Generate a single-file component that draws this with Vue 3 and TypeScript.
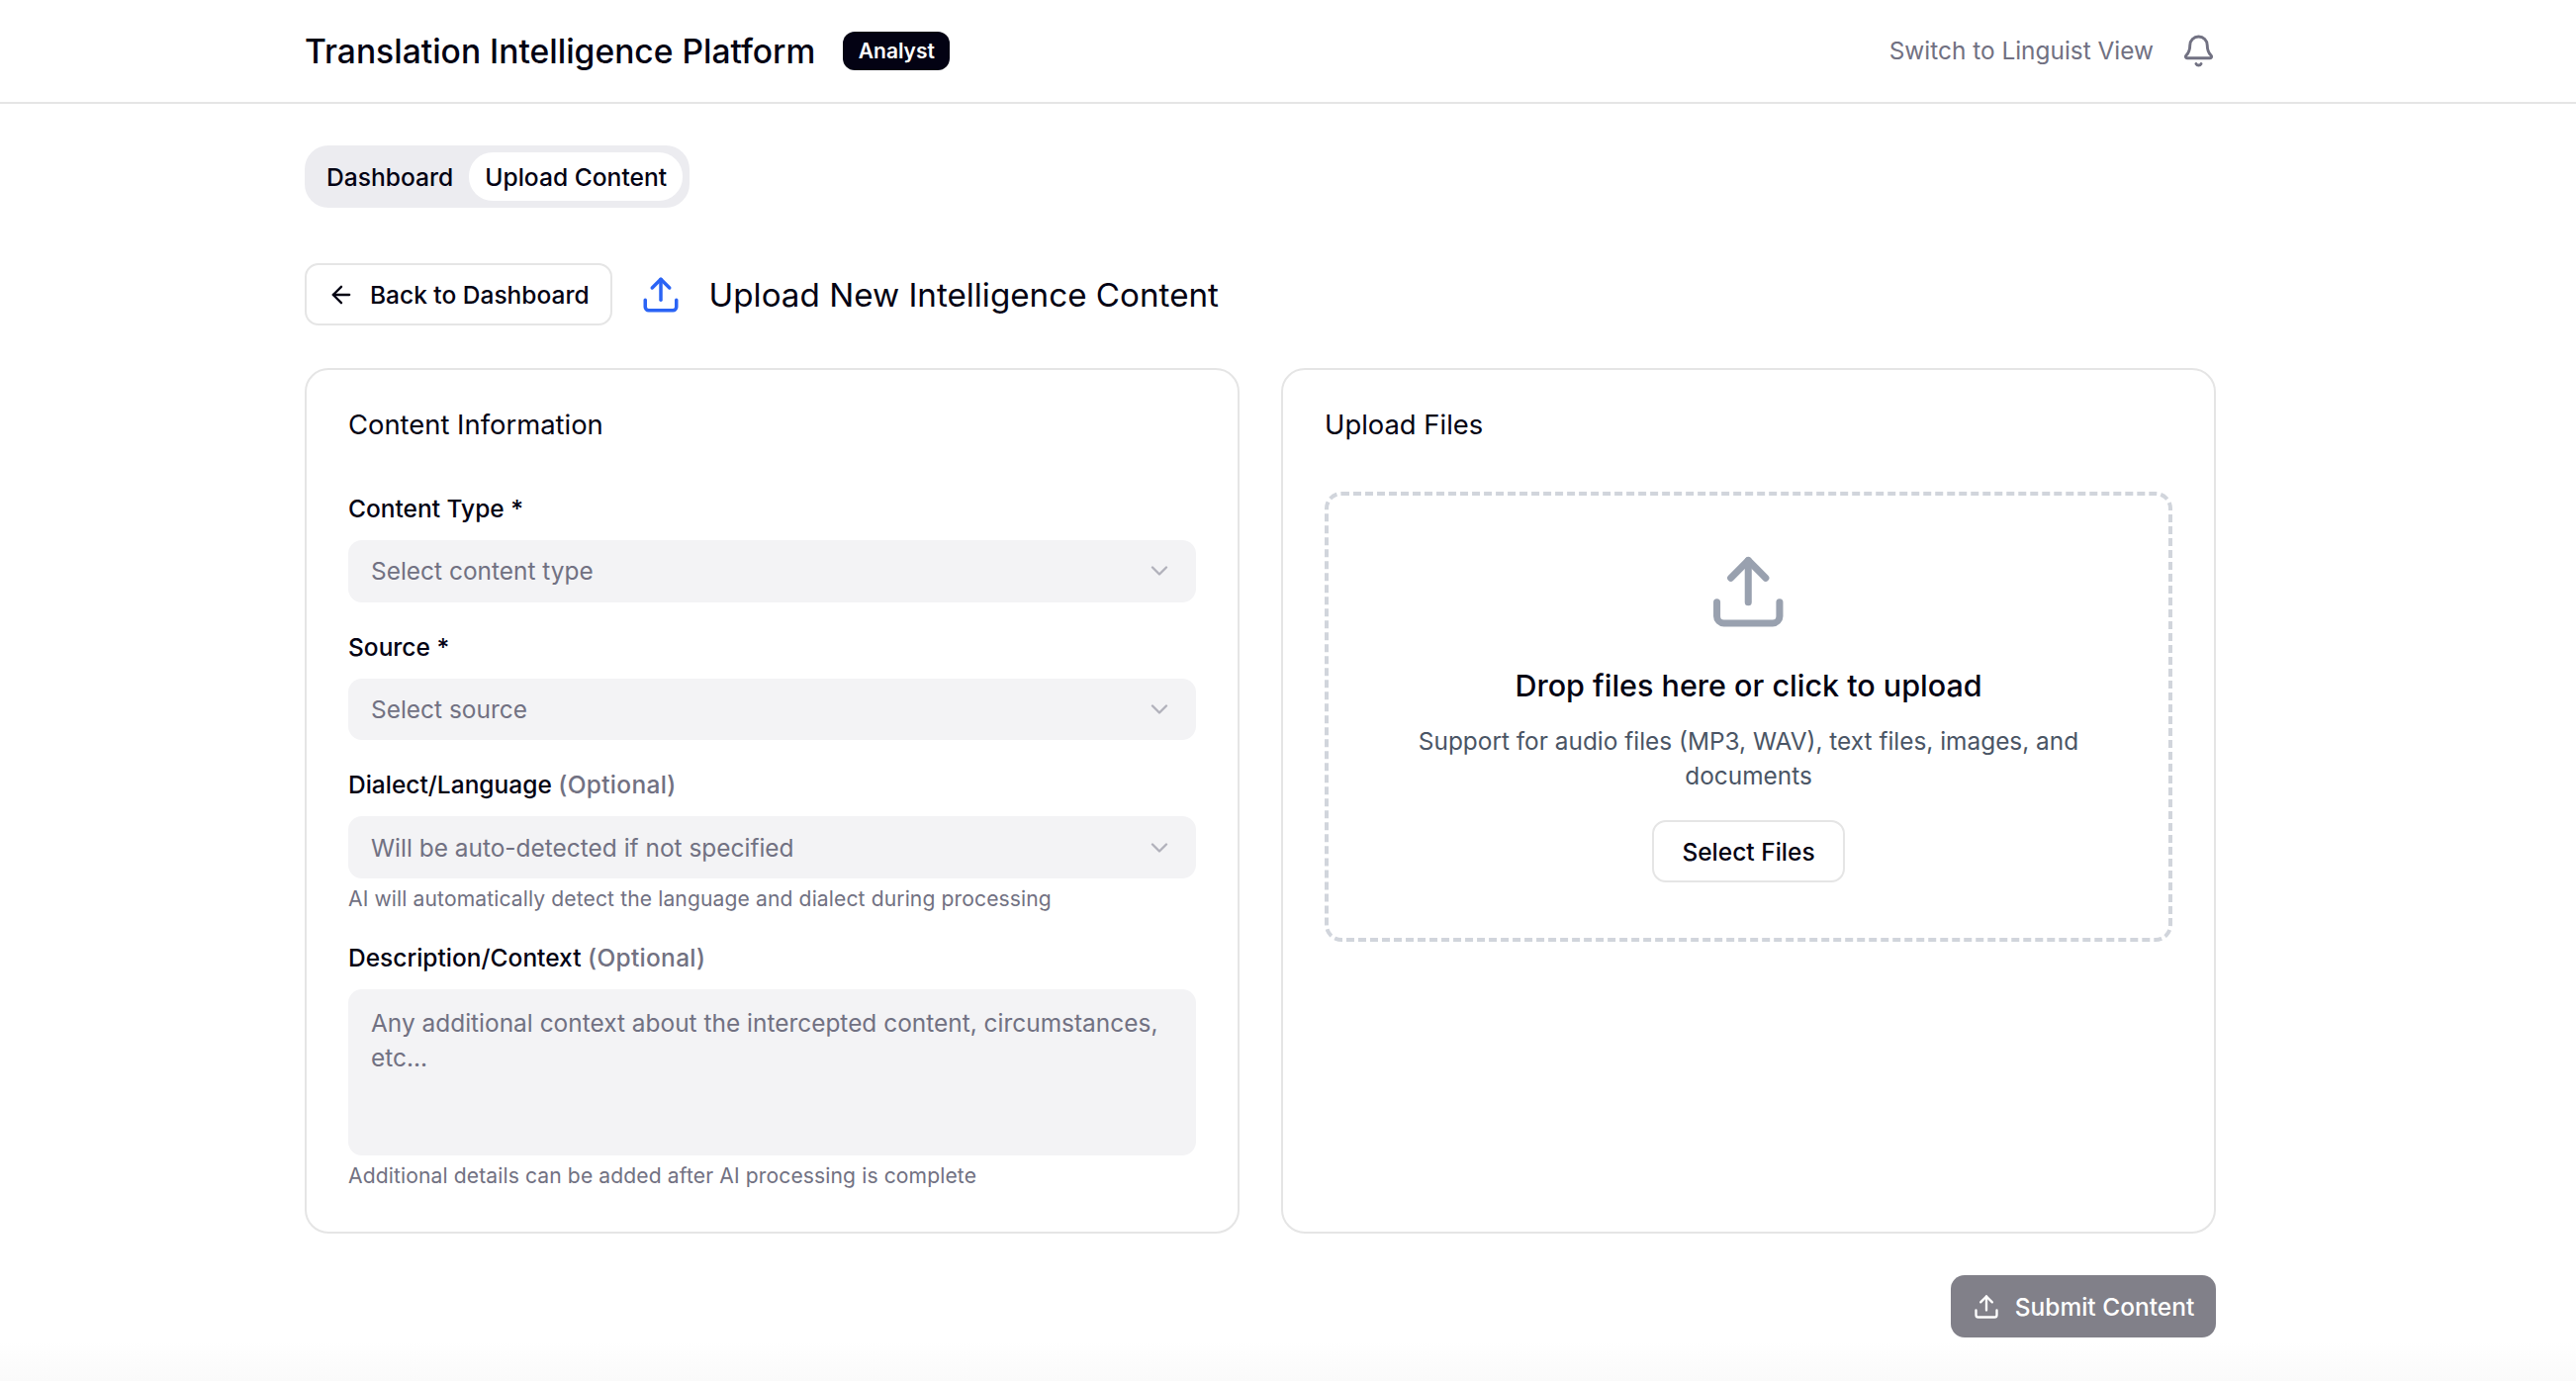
<script setup lang="ts">
interface Field {
  label: string
  suffix: string
  value: string
  help?: string
}

const fields: Field[] = [
  { label: 'Content Type *', suffix: '', value: 'Select content type' },
  { label: 'Source *', suffix: '', value: 'Select source' },
  {
    label: 'Dialect/Language',
    suffix: '(Optional)',
    value: 'Will be auto-detected if not specified',
    help: 'AI will automatically detect the language and dialect during processing',
  },
]
</script>

<template>
  <div class="page">
    <header class="topbar">
      <div class="brand">
        <h1 class="brand-title">Translation Intelligence Platform</h1>
        <span class="badge">Analyst</span>
      </div>
      <div class="top-actions">
        <span class="switch">Switch to Linguist View</span>
        <svg class="bell" viewBox="0 0 24 24" fill="none" stroke="currentColor" stroke-width="2" stroke-linecap="round" stroke-linejoin="round">
          <path d="M10.268 21a2 2 0 0 0 3.464 0" />
          <path d="M3.262 15.326A1 1 0 0 0 4 17h16a1 1 0 0 0 .74-1.673C19.41 13.956 18 12.499 18 8A6 6 0 0 0 6 8c0 4.499-1.411 5.956-2.738 7.326" />
        </svg>
      </div>
    </header>

    <main class="content">
      <div class="tabs">
        <span class="tab">Dashboard</span>
        <span class="tab active">Upload Content</span>
      </div>

      <div class="heading-row">
        <button class="btn back" type="button">
          <svg class="icon-sm" viewBox="0 0 24 24" fill="none" stroke="currentColor" stroke-width="2" stroke-linecap="round" stroke-linejoin="round">
            <path d="m12 19-7-7 7-7" />
            <path d="M19 12H5" />
          </svg>
          Back to Dashboard
        </button>
        <svg class="icon-blue" viewBox="0 0 24 24" fill="none" stroke="currentColor" stroke-width="2" stroke-linecap="round" stroke-linejoin="round">
          <path d="M21 15v4a2 2 0 0 1-2 2H5a2 2 0 0 1-2-2v-4" />
          <polyline points="17 8 12 3 7 8" />
          <line x1="12" x2="12" y1="3" y2="15" />
        </svg>
        <h2 class="page-title">Upload New Intelligence Content</h2>
      </div>

      <div class="columns">
        <section class="card">
          <h3 class="card-title">Content Information</h3>
          <div class="form">
            <div v-for="f in fields" :key="f.label" class="field">
              <label class="label">{{ f.label }} <span v-if="f.suffix" class="muted">{{ f.suffix }}</span></label>
              <div class="select">
                <span>{{ f.value }}</span>
                <svg class="chev" viewBox="0 0 24 24" fill="none" stroke="currentColor" stroke-width="2" stroke-linecap="round" stroke-linejoin="round">
                  <path d="m6 9 6 6 6-6" />
                </svg>
              </div>
              <p v-if="f.help" class="help">{{ f.help }}</p>
            </div>
            <div class="field">
              <label class="label">Description/Context <span class="muted">(Optional)</span></label>
              <div class="textarea">Any additional context about the intercepted content, circumstances, etc...</div>
              <p class="help">Additional details can be added after AI processing is complete</p>
            </div>
          </div>
        </section>

        <section class="card">
          <h3 class="card-title">Upload Files</h3>
          <div class="drop">
            <svg class="icon-lg" viewBox="0 0 24 24" fill="none" stroke="currentColor" stroke-width="2" stroke-linecap="round" stroke-linejoin="round">
              <path d="M21 15v4a2 2 0 0 1-2 2H5a2 2 0 0 1-2-2v-4" />
              <polyline points="17 8 12 3 7 8" />
              <line x1="12" x2="12" y1="3" y2="15" />
            </svg>
            <h4 class="drop-title">Drop files here or click to upload</h4>
            <p class="drop-text">Support for audio files (MP3, WAV), text files, images, and documents</p>
            <button class="btn select-files" type="button">Select Files</button>
          </div>
        </section>
      </div>

      <div class="footer-row">
        <button class="submit" type="button">
          <svg class="icon-sm" viewBox="0 0 24 24" fill="none" stroke="currentColor" stroke-width="2" stroke-linecap="round" stroke-linejoin="round">
            <path d="M21 15v4a2 2 0 0 1-2 2H5a2 2 0 0 1-2-2v-4" />
            <polyline points="17 8 12 3 7 8" />
            <line x1="12" x2="12" y1="3" y2="15" />
          </svg>
          Submit Content
        </button>
      </div>
    </main>
  </div>
</template>

<style>
html,
body {
  margin: 0;
  background: #fff;
}
</style>

<style scoped>
.page {
  box-sizing: border-box;
  height: 1396px;
  overflow: hidden;
  font-family: Inter, "Liberation Sans", sans-serif;
  color: #030213;
  background: linear-gradient(to bottom, #fff calc(100% - 40px), #fafafa 100%);
}

.topbar {
  box-sizing: border-box;
  height: 105px;
  padding: 0 364px 0 308px;
  display: flex;
  align-items: center;
  justify-content: space-between;
  border-bottom: 2px solid #e5e5e5;
}

.brand {
  display: flex;
  align-items: center;
  gap: 28px;
}

.brand-title {
  margin: 0;
  font-size: 33.6px;
  line-height: 49px;
  font-weight: 500;
}

.badge {
  box-sizing: border-box;
  width: 108px;
  height: 39px;
  display: flex;
  align-items: center;
  justify-content: center;
  border-radius: 12px;
  background: #030213;
  color: #fff;
  font-size: 21px;
  font-weight: 600;
}

.top-actions {
  display: flex;
  align-items: center;
  gap: 28px;
  color: #717182;
}

.switch {
  font-size: 24.4px;
  line-height: 35px;
}

.bell {
  width: 35px;
  height: 35px;
}

.content {
  padding: 42px 364px 0 308px;
}

.tabs {
  box-sizing: border-box;
  width: 389px;
  height: 63px;
  padding: 7px 6px;
  display: flex;
  align-items: center;
  gap: 0;
  border-radius: 24px;
  background: #ececf0;
}

.tab {
  box-sizing: border-box;
  height: 49px;
  padding: 0 16px;
  display: flex;
  align-items: center;
  border-radius: 24px;
  font-size: 24.6px;
  font-weight: 500;
  white-space: nowrap;
}

.tab.active {
  background: #fff;
}

.heading-row {
  margin-top: 56px;
  height: 63px;
  display: flex;
  align-items: center;
}

.btn {
  box-sizing: border-box;
  height: 63px;
  display: inline-flex;
  align-items: center;
  justify-content: center;
  gap: 15px;
  padding: 0 21px;
  border: 2px solid #e5e5e5;
  border-radius: 14px;
  background: #fff;
  color: #030213;
  font-family: inherit;
  font-size: 24.5px;
  font-weight: 500;
  white-space: nowrap;
}

.select-files {
  padding: 0 28px;
}

.icon-sm {
  width: 28px;
  height: 28px;
  flex: none;
}

.icon-blue {
  width: 42px;
  height: 42px;
  margin: 0 28px;
  flex: none;
  color: #2b64f5;
}

.page-title {
  margin: 0;
  padding-top: 2px;
  font-size: 33.2px;
  line-height: 49px;
  font-weight: 400;
}

.columns {
  margin-top: 43px;
  display: grid;
  grid-template-columns: 1fr 1fr;
  gap: 42px;
}

.card {
  box-sizing: border-box;
  height: 875px;
  padding: 41px 42px 40px;
  border: 2px solid #e5e5e5;
  border-radius: 24px;
  background: #fff;
}

.card-title {
  margin: 0;
  font-size: 27.4px;
  line-height: 28px;
  font-weight: 400;
}

.form {
  margin-top: 54px;
  display: flex;
  flex-direction: column;
  gap: 28px;
}

.label {
  display: block;
  font-size: 24.5px;
  line-height: 35px;
  font-weight: 500;
  margin-bottom: 14px;
}

.muted {
  color: #717182;
  letter-spacing: 0.3px;
}

.select {
  box-sizing: border-box;
  height: 62.7px;
  padding: 0 23px;
  display: flex;
  align-items: center;
  justify-content: space-between;
  border-radius: 14px;
  background: #f3f3f5;
  color: #717182;
  font-size: 24.45px;
}

.chev {
  width: 28px;
  height: 28px;
  opacity: 0.5;
}

.help {
  margin: 7px 0 0;
  font-size: 21.1px;
  line-height: 28px;
  letter-spacing: 0.11px;
  color: #717182;
}

.textarea {
  box-sizing: border-box;
  height: 168px;
  padding: 17px 23px;
  border-radius: 14px;
  background: #f3f3f5;
  color: #717182;
  font-size: 24.45px;
  line-height: 35.2px;
}

.drop {
  box-sizing: border-box;
  margin-top: 54px;
  padding: 55px 56px 56px;
  display: flex;
  flex-direction: column;
  align-items: center;
  text-align: center;
  border: 4px dashed #d1d5dc;
  border-radius: 17px;
}

.icon-lg {
  width: 84.5px;
  height: 84.5px;
  color: #99a1af;
}

.drop-title {
  margin: 27px 0 15.5px;
  font-size: 30.5px;
  line-height: 49px;
  font-weight: 500;
}

.drop-text {
  margin: 0 0 27px;
  font-size: 24.4px;
  line-height: 35.2px;
  color: #4a5565;
}

.footer-row {
  margin-top: 42px;
  display: flex;
  justify-content: flex-end;
}

.submit {
  box-sizing: border-box;
  width: 268px;
  height: 63px;
  display: inline-flex;
  align-items: center;
  justify-content: center;
  gap: 15px;
  border: 0;
  border-radius: 14px;
  background: #818089;
  color: #fff;
  font-family: inherit;
  font-size: 24.5px;
  font-weight: 500;
  white-space: nowrap;
}
</style>
